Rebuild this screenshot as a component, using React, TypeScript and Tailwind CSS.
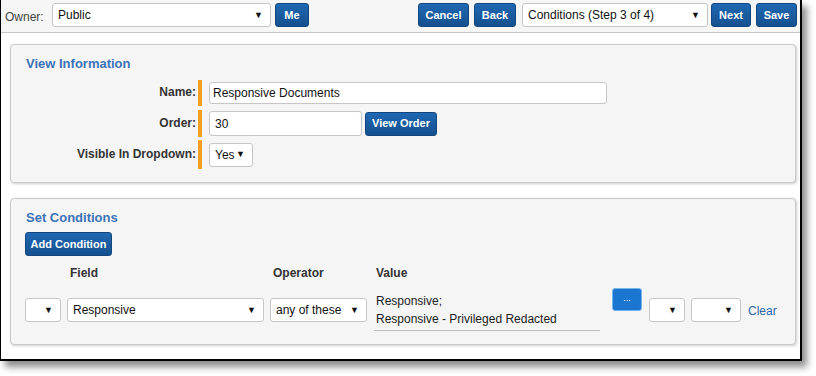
import React from 'react';

const font = { fontFamily: '"Liberation Sans", Arial, sans-serif' };

function Btn({ label, className = '' }: { label: string; className?: string }) {
  return (
    <div
      className={`flex items-center justify-center h-[24px] rounded-[3px] border border-[#11467f] bg-gradient-to-b from-[#2068b2] to-[#14508f] text-white text-[11px] font-bold ${className}`}
    >
      {label}
    </div>
  );
}

function Select({ value = '', className = '' }: { value?: string; className?: string }) {
  return (
    <div
      className={`flex items-center justify-between bg-white border border-[#c6c6c6] rounded-[3px] pl-[5px] pr-[7px] text-[12px] text-[#111] ${className}`}
    >
      <span>{value}</span>
      <span className="text-[9px] leading-none">▼</span>
    </div>
  );
}

function FormRow({ label, h, children }: { label: string; h: string; children: React.ReactNode }) {
  return (
    <div className={`flex items-stretch ${h}`}>
      <div className="w-[187px] flex items-center justify-end pr-[2px] pb-[2px] text-[12px] font-bold text-[#333]">
        {label}
      </div>
      <div className="w-[4px] bg-[#f5a020]" />
      <div className="flex items-center gap-[3px] pl-[7px]">{children}</div>
    </div>
  );
}

export default function App() {
  return (
    <div className="w-[816px] h-[376px] bg-white overflow-hidden" style={font}>
      <div className="w-[802px] h-[361px] border-l border-r-2 border-b-2 border-black bg-white shadow-[5px_6px_7px_rgba(0,0,0,0.45)]">
        {/* top bar */}
        <div className="h-[33px] bg-[#f6f6f6] border-b border-[#c8c8c8] flex items-start pt-[3px] pl-[4px] pr-[3px]">
          <span className="text-[12px] text-[#444] mt-[5px] w-[47px]">Owner:</span>
          <Select value="Public" className="w-[219px] h-[24px]" />
          <Btn label="Me" className="w-[34px] ml-[4px]" />
          <div className="flex-1" />
          <Btn label="Cancel" className="w-[51px]" />
          <Btn label="Back" className="w-[42px] ml-[5px]" />
          <Select value="Conditions (Step 3 of 4)" className="w-[186px] h-[24px] ml-[6px]" />
          <Btn label="Next" className="w-[40px] ml-[3px]" />
          <Btn label="Save" className="w-[41px] ml-[5px]" />
        </div>

        {/* View Information */}
        <div className="ml-[9px] mt-[11px] w-[786px] h-[139px] bg-[#f5f5f5] border border-[#c9c9c9] rounded-[4px] shadow-[1px_1px_3px_rgba(0,0,0,0.2)] pt-[10px]">
          <div className="pl-[15px] text-[13px] font-bold text-[#3b72b7] leading-[18px]">View Information</div>
          <div className="mt-[7px] flex flex-col">
            <FormRow label="Name:" h="h-[26px]">
              <div className="w-[398px] h-[22px] bg-white border border-[#c6c6c6] rounded-[3px] flex items-center pl-[3px] text-[12px] text-[#111]">
                Responsive Documents
              </div>
            </FormRow>
            <div className="h-[4px]" />
            <FormRow label="Order:" h="h-[27px]">
              <div className="w-[153px] h-[25px] bg-white border border-[#c6c6c6] rounded-[3px] flex items-center pl-[5px] text-[12px] text-[#111]">
                30
              </div>
              <Btn label="View Order" className="w-[72px]" />
            </FormRow>
            <div className="h-[3px]" />
            <FormRow label="Visible In Dropdown:" h="h-[29px]">
              <Select value="Yes" className="w-[44px] h-[24px] pl-[4px] pr-[4px]" />
            </FormRow>
          </div>
        </div>

        {/* Set Conditions */}
        <div className="ml-[9px] mt-[15px] w-[786px] h-[147px] bg-[#f5f5f5] border border-[#c9c9c9] rounded-[4px] shadow-[1px_1px_3px_rgba(0,0,0,0.2)] pt-[10px] pl-[14px]">
          <div className="pl-[1px] text-[13px] font-bold text-[#3b72b7] leading-[18px]">Set Conditions</div>
          <Btn label="Add Condition" className="w-[87px] mt-[5px]" />
          <div className="flex mt-[9px] text-[12px] font-bold text-[#333] leading-[16px]">
            <div className="w-[45px]" />
            <div className="w-[203px]">Field</div>
            <div className="w-[103px]">Operator</div>
            <div>Value</div>
          </div>
          <div className="flex items-start mt-[7px]">
            <Select className="w-[36px] h-[24px] mt-[10px]" />
            <Select value="Responsive" className="w-[197px] h-[24px] mt-[10px] ml-[6px]" />
            <Select value="any of these" className="w-[97px] h-[24px] mt-[10px] ml-[6px] pl-[3px]" />
            <div className="w-[226px] ml-[7px] mt-[4px] pl-[2px] pb-[2px] border-b border-[#bdbdbd] text-[12px] text-[#222] leading-[18px]">
              <div>Responsive;</div>
              <div>Responsive - Privileged Redacted</div>
            </div>
            <div className="w-[30px] h-[23px] ml-[12px] rounded-[3px] border border-[#72b4ee] bg-[#1a76cf] flex items-center justify-center text-white text-[9px] leading-none pb-[3px]">
              ...
            </div>
            <Select className="w-[36px] h-[24px] mt-[10px] ml-[7px]" />
            <Select className="w-[50px] h-[24px] mt-[10px] ml-[6px]" />
            <span className="ml-[7px] mt-[14px] text-[12px] text-[#2a67ae]">Clear</span>
          </div>
        </div>
      </div>
    </div>
  );
}
